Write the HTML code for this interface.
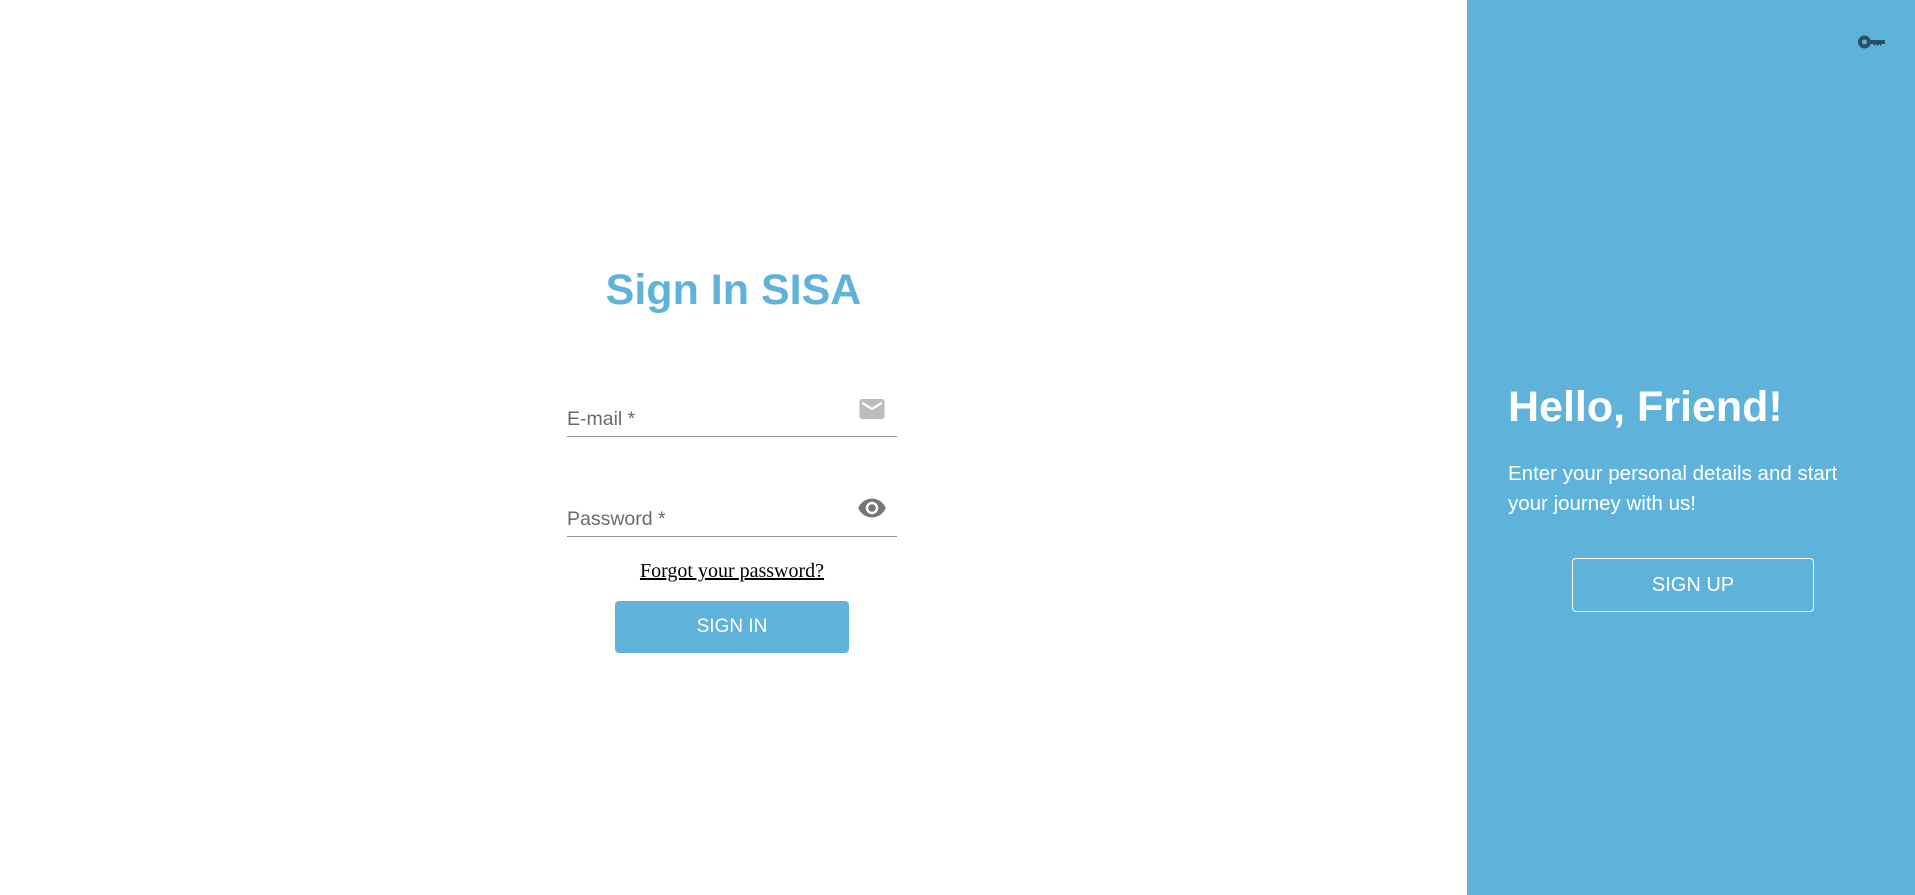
<!DOCTYPE html>
<html><head><meta charset="utf-8"><style>
html,body{margin:0;padding:0;width:1915px;height:895px;overflow:hidden;background:#fff;font-family:"Liberation Sans",Arial,sans-serif;}
.abs{position:absolute;}
.panel{position:absolute;left:1467px;top:0;width:448px;height:895px;background:#5fb3db;}
</style></head><body>
<div class="abs" style="left:0;top:264px;width:1467px;text-align:center;font-size:43px;font-weight:bold;color:#5fb3db;line-height:52px;white-space:nowrap;">Sign In SISA</div>

<div class="abs" style="left:567px;top:408px;font-size:19.5px;color:#6b6b6b;">E-mail *</div>
<div class="abs" style="left:567px;top:436px;width:330px;height:1px;background:#949494;"></div>
<svg class="abs" style="left:857px;top:394px" width="30" height="30" viewBox="0 0 24 24"><path fill="#bdbdbd" d="M20 4H4c-1.1 0-2 .9-2 2v12c0 1.1.9 2 2 2h16c1.1 0 2-.9 2-2V6c0-1.1-.9-2-2-2zm0 4l-8 5-8-5V6l8 5 8-5v2z"/></svg>

<div class="abs" style="left:567px;top:508px;font-size:19.5px;color:#6b6b6b;">Password *</div>
<div class="abs" style="left:567px;top:536px;width:330px;height:1px;background:#949494;"></div>
<svg class="abs" style="left:857px;top:493px" width="30" height="30" viewBox="0 0 24 24"><path fill="#757575" d="M12 4.5C7 4.5 2.73 7.61 1 12c1.73 4.39 6 7.5 11 7.5s9.27-3.11 11-7.5c-1.73-4.39-6-7.5-11-7.5zM12 17c-2.76 0-5-2.24-5-5s2.24-5 5-5 5 2.24 5 5-2.24 5-5 5zm0-8c-1.66 0-3 1.34-3 3s1.34 3 3 3 3-1.34 3-3-1.34-3-3-3z"/></svg>

<div class="abs" style="left:567px;top:560px;width:330px;text-align:center;font-family:'Liberation Serif',serif;font-size:20px;color:#000;text-decoration:underline;white-space:nowrap;">Forgot your password?</div>

<div class="abs" style="left:615px;top:601px;width:234px;height:52px;background:#5fb3db;border-radius:4px;color:#fff;font-size:19px;line-height:52px;text-align:center;">SIGN IN</div>

<div class="panel">
<svg class="abs" style="left:391px;top:34px" width="28" height="16" viewBox="0 0 28 16"><path fill="#2b4f66" fill-rule="evenodd" d="M6.5 1.5a6.5 6.5 0 1 0 6.2 8.5H15l1.5 2 1.5-2 1.5 2 1.5-2 1.5 2 1.5-2H27V6H12.7A6.5 6.5 0 0 0 6.5 1.5zm0 4a2.5 2.5 0 1 1 0 5 2.5 2.5 0 0 1 0-5z"/></svg>
<div class="abs" style="left:41px;top:382px;font-size:43px;font-weight:bold;color:#fff;white-space:nowrap;line-height:50px;">Hello, Friend!</div>
<div class="abs" style="left:41px;top:459px;width:340px;font-size:20.5px;color:#fff;line-height:30px;">Enter your personal details and start your journey with us!</div>
<div class="abs" style="left:105px;top:558px;width:240px;height:52px;border:1px solid #fff;border-radius:4px;color:#fff;font-size:20px;line-height:52px;text-align:center;">SIGN UP</div>
</div>
</body></html>
